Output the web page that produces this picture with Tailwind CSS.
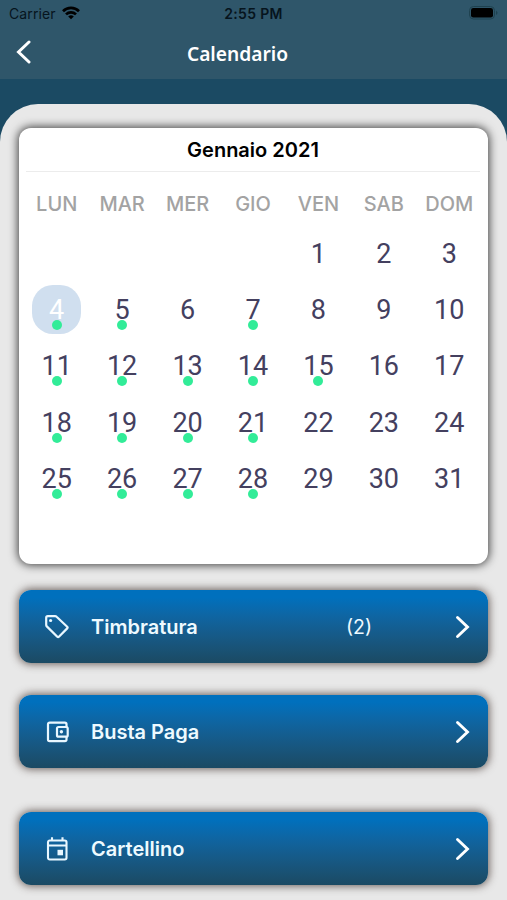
<!DOCTYPE html>
<html lang="it">
<head>
<meta charset="utf-8">
<title>Calendario</title>
<script src="https://cdn.jsdelivr.net/npm/@tailwindcss/browser@4"></script>
</head>
<body class="h-[900px] w-[507px] overflow-hidden bg-[#1b4a63] font-['Inter',sans-serif]">
<header class="h-[79px] bg-[#2f566a]">
  <div class="grid h-[28px] grid-cols-3 items-center pl-[9px] pr-[9px] text-[#06141d]">
    <div class="flex items-center gap-[6px]">
      <span class="text-[14px] leading-[28px] tracking-[0.1px]">Carrier</span>
      <svg class="mb-[2px] h-[14px] w-[18px]" viewBox="0 0 18 14" fill="none" stroke="#000" stroke-width="2.7"><path d="M1 5.2a11.5 11.5 0 0 1 16 0M4 8.4a7.2 7.2 0 0 1 10 0"/><path d="M6.2 10.5a4.2 4.2 0 0 1 5.6 0L9 13.3z" fill="#000" stroke="none"/></svg>
    </div>
    <span class="text-center text-[14px] font-semibold leading-[28px] tracking-[0.3px]">2:55 PM</span>
    <svg class="mb-[2px] h-[14px] w-[29px] justify-self-end" viewBox="0 0 29 14"><rect x=".5" y=".5" width="25" height="12.5" rx="4" fill="none" stroke="#1f4250"/><rect x="2" y="2" width="22" height="9.5" rx="2.3" fill="#000"/><path d="M27 4.5q3 2.3 0 4.6z" fill="#1f4250"/></svg>
  </div>
  <div class="flex h-[51px] items-center">
    <svg class="ml-[16px] mb-[3px] h-[24px] w-[16px] shrink-0" viewBox="0 0 16 24" fill="none" stroke="#fff" stroke-width="3" stroke-linecap="round" stroke-linejoin="miter"><path d="M13 2 2.5 12 13 22"/></svg>
    <h1 class="w-[411px] text-center font-['Noto_Sans',sans-serif] text-[19.2px] font-semibold leading-[51px] text-white">Calendario</h1>
  </div>
</header>
<main class="mt-[24.5px] h-[797px] rounded-t-[38px] bg-[#e8e8e8] px-[19px] pt-[24px]">
  <section class="h-[436.5px] rounded-[12px] bg-white pl-[5px] pr-[6px] shadow-[0_0_10px_1px_rgba(0,0,0,0.75)]">
    <h2 class="mx-[2px] h-[44px] border-b border-[#ececec] text-center text-[20px] font-semibold leading-[44px] text-black">Gennaio 2021</h2>
    <div id="week" class="mt-[12px] grid h-[42px] grid-cols-7 text-center text-[20px] font-medium leading-[40px] text-[#a3a3a3]"></div>
    <div id="days" class="grid auto-rows-[56.2px] grid-cols-7 font-['Roboto',sans-serif] text-[27px] text-[#44405f]"></div>
  </section>
  <nav id="menu" class="pt-[25.5px]">
    <a class="flex h-[73.5px] items-center rounded-[12px] bg-linear-to-b from-[#0070bd] from-10% to-[#1b4a63] pl-[26px] pr-[18px] pt-[2px] text-white shadow-[0_0_9px_1px_rgba(60,45,40,0.75)]">
      <svg class="h-[24px] w-[24px]" viewBox="0 0 24 24" fill="none" stroke="#e9f7ff" stroke-width="2.2" stroke-linejoin="round"><path d="M2.800 1.200H10q1 0 1.600.6l10.600 10q.8.8 0 1.600l-8.300 8.300q-.8.8-1.600 0L1.800 11.400Q1.200 10.800 1.200 10V2.800q0-1.600 1.600-1.600z"/><circle cx="5.600" cy="5.500" r="1.600" fill="#e9f7ff" stroke="none"/></svg>
      <span class="ml-[22px] w-[255px] text-[20px] font-semibold leading-[30px] text-[#eefaff]">Timbratura</span>
      <span class="text-[19.5px] leading-[30px] text-[#eefaff]">(2)</span>
      <svg class="ml-auto h-[24px] w-[15px]" viewBox="0 0 15 24" fill="none" stroke="#fff" stroke-width="2.9" stroke-linecap="round"><path d="M2.5 2.5 12.5 12l-10 9.5"/></svg>
    </a>
    <a class="mt-[31.5px] flex h-[73.5px] items-center rounded-[12px] bg-linear-to-b from-[#0070bd] from-10% to-[#1b4a63] pl-[26px] pr-[18px] pt-[2px] text-white shadow-[0_0_9px_1px_rgba(60,45,40,0.75)]">
      <svg class="h-[24px] w-[24px]" viewBox="0 0 24 24" fill="none" stroke="#e9f7ff" stroke-width="2.2"><path d="M21.500 7V4.300q0-1.700-1.700-1.700H4.700Q3 2.600 3 4.300v15.200q0 1.700 1.700 1.700h15.100q1.700 0 1.700-1.700V17"/><rect x="12" y="7" width="10.700" height="9.700" rx="1.500"/><circle cx="16.400" cy="11.800" r="1.700" fill="#e9f7ff" stroke="none"/></svg>
      <span class="ml-[22px] text-[20px] font-semibold leading-[30px] text-[#eefaff]">Busta Paga</span>
      <svg class="ml-auto h-[24px] w-[15px]" viewBox="0 0 15 24" fill="none" stroke="#fff" stroke-width="2.9" stroke-linecap="round"><path d="M2.5 2.5 12.5 12l-10 9.5"/></svg>
    </a>
    <a class="mt-[43.5px] flex h-[73.5px] items-center rounded-[12px] bg-linear-to-b from-[#0070bd] from-10% to-[#1b4a63] pl-[26px] pr-[18px] pt-[2px] text-white shadow-[0_0_9px_1px_rgba(60,45,40,0.75)]">
      <svg class="h-[24px] w-[24px]" viewBox="0 0 24 24" fill="none" stroke="#e9f7ff" stroke-width="2.1"><rect x="3" y="3.500" width="18.500" height="19" rx="1.700"/><path d="M3 8.500h18.500M7 .3v3M17.500 .3v3"/><path d="M12.500 12.800H18v5.500h-5.500z" fill="#e9f7ff" stroke="none"/></svg>
      <span class="ml-[22px] text-[20px] font-semibold leading-[30px] text-[#eefaff]">Cartellino</span>
      <svg class="ml-auto h-[24px] w-[15px]" viewBox="0 0 15 24" fill="none" stroke="#fff" stroke-width="2.9" stroke-linecap="round"><path d="M2.5 2.5 12.5 12l-10 9.5"/></svg>
    </a>
  </nav>
</main>
<script>
document.getElementById('week').innerHTML = ['LUN','MAR','MER','GIO','VEN','SAB','DOM'].map(d => `<span>${d}</span>`).join('');
const marked = [4,5,7,11,12,13,14,15,18,19,20,21,25,26,27,28];
let cells = '<div></div><div></div><div></div><div></div>';
for (let d = 1; d <= 31; d++) {
  const dot = marked.includes(d) ? '<i class="absolute left-1/2 top-[35px] size-[10px] -translate-x-1/2 rounded-full bg-[#32ec98]"></i>' : '';
  const tone = d === 4 ? 'bg-[#d0dfef] text-white' : '';
  cells += `<div class="flex items-center justify-center"><div class="relative size-[49px] rounded-[21px] text-center leading-[50px] ${tone}">${d}${dot}</div></div>`;
}
document.getElementById('days').innerHTML = cells;
</script>
</body>
</html>
